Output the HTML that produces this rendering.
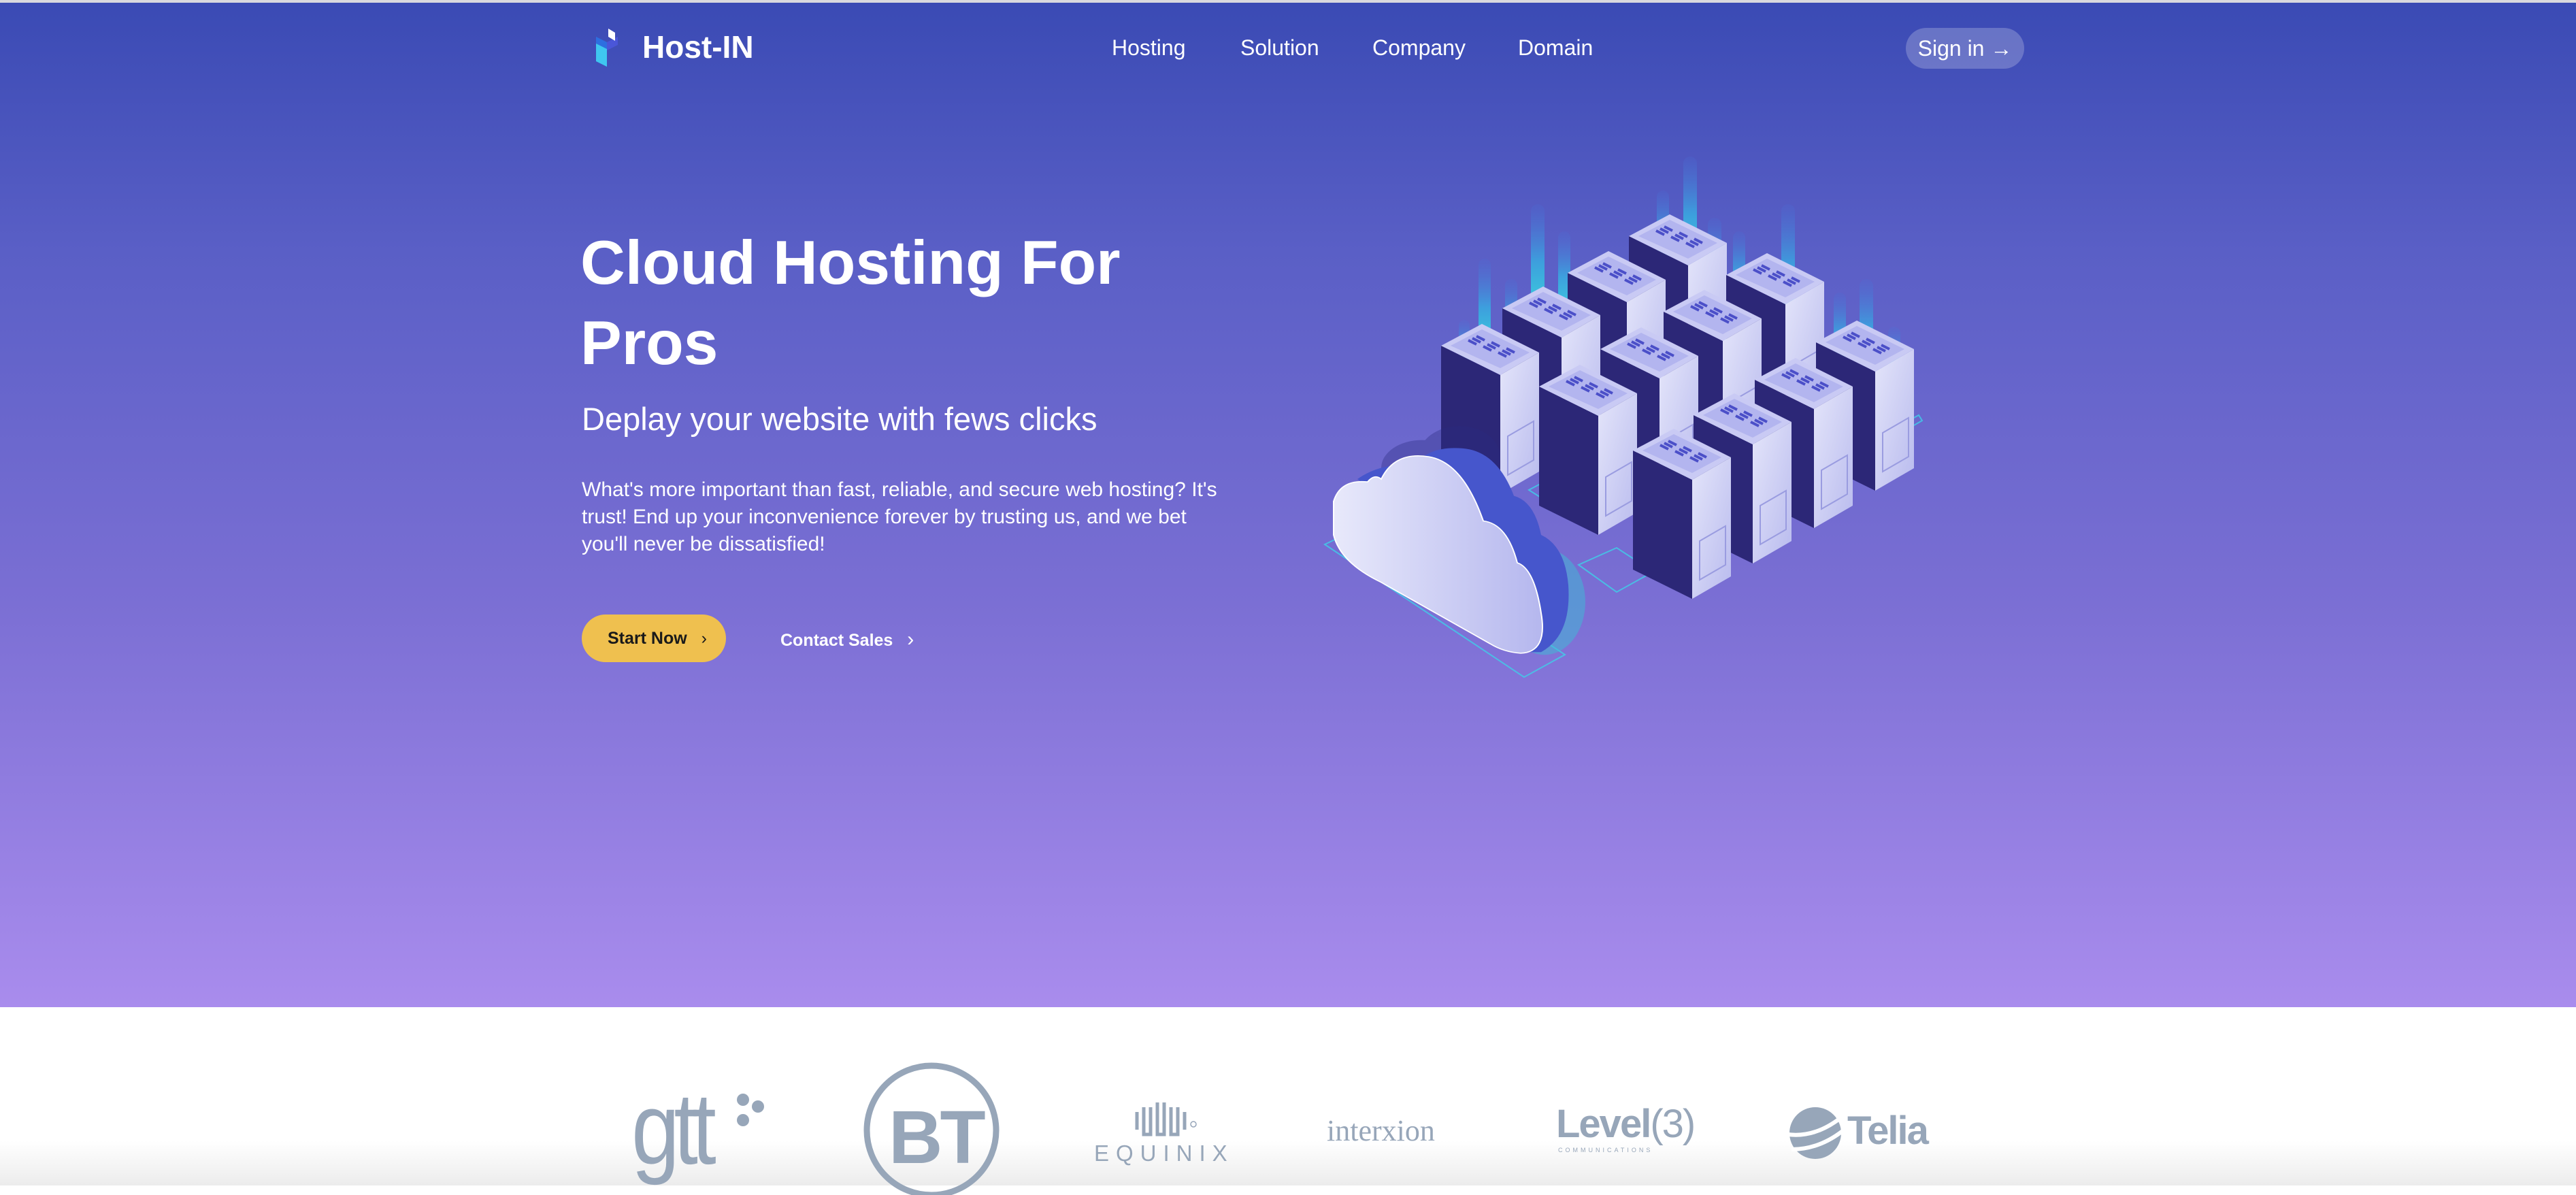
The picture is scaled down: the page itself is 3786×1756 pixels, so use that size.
<!DOCTYPE html>
<html><head><meta charset="utf-8"><style>
*{margin:0;padding:0;box-sizing:border-box}
body{width:3786px;height:1742px;overflow:hidden;font-family:"Liberation Sans",sans-serif;background:#fff;position:relative}
.hero{position:absolute;left:0;top:0;width:3786px;height:1480px;background:linear-gradient(180deg,#3a4ab4 0%,#5a5fc6 25%,#7b6fd4 60%,#a98ced 100%)}
.topline{position:absolute;left:0;top:0;width:3786px;height:4px;background:#d9d9de}
.abs{position:absolute;color:#fff;white-space:nowrap}
.nav{font-size:32px;top:52px}
.signin{position:absolute;left:2801px;top:41px;width:174px;height:60px;border-radius:30px;background:rgba(255,255,255,.22);color:#fff;font-size:32px;line-height:60px;text-align:center}
h1{position:absolute;left:853px;top:328px;font-size:91px;line-height:118px;color:#fff;font-weight:700}
.sub{left:855px;top:588px;font-size:47px;font-weight:400}
.para{position:absolute;left:855px;top:700px;width:935px;font-size:30px;line-height:40px;color:#fff}
.btn{position:absolute;left:855px;top:903px;width:212px;height:70px;border-radius:35px;background:#efc04f;color:#1a1a1a;font-weight:700;font-size:25px;line-height:70px;padding-left:38px}
.contact{left:1147px;top:923px;font-size:25px;font-weight:700}
.bottom{position:absolute;left:0;top:1480px;width:3786px;height:262px;background:linear-gradient(180deg,#fff 0%,#fff 75%,#ececec 100%)}
.logo{position:absolute;color:#97a6b9;white-space:nowrap}
</style></head><body>
<div class="hero"></div>
<div class="topline"></div>

<svg class="abs" style="left:872px;top:40px" width="50" height="62" viewBox="0 0 50 62">
<polygon points="4,14 20,22 20,58 4,50" fill="#2d6fe0"/>
<polygon points="4,24 20,32 20,58 4,50" fill="#3fc6f0"/>
<polygon points="20,22 36,14 36,26 20,34" fill="#4a56d8"/>
<polygon points="22,2 32,8 32,20 22,14" fill="#fff"/>
</svg>
<div class="abs" style="left:944px;top:42px;font-size:46px;font-weight:700">Host-IN</div>
<div class="abs nav" style="left:1634px">Hosting</div>
<div class="abs nav" style="left:1823px">Solution</div>
<div class="abs nav" style="left:2017px">Company</div>
<div class="abs nav" style="left:2231px">Domain</div>
<div class="signin">Sign in →</div>

<h1>Cloud Hosting For<br>Pros</h1>
<div class="abs sub">Deplay your website with fews clicks</div>
<div class="para">What's more important than fast, reliable, and secure web hosting? It's trust! End up your inconvenience forever by trusting us, and we bet you'll never be dissatisfied!</div>
<div class="btn">Start Now <span style="font-weight:400;margin-left:14px">›</span></div>
<div class="abs contact">Contact Sales <span style="font-weight:400;margin-left:14px;font-size:30px">›</span></div>

<svg class="abs" style="left:0;top:0" width="3786" height="1480" viewBox="0 0 3786 1480">
<defs>
<linearGradient id="bar" x1="0" y1="0" x2="0" y2="1"><stop offset="0" stop-color="#4a6fd8" stop-opacity=".2"/><stop offset=".6" stop-color="#3aa6e0"/><stop offset="1" stop-color="#38d0e0"/></linearGradient>
<linearGradient id="rf" x1="0" y1="0" x2="1" y2="1"><stop offset="0" stop-color="#e4e5fa"/><stop offset="1" stop-color="#b9bbee"/></linearGradient>
<linearGradient id="cl" x1="0" y1="0" x2="1" y2="0"><stop offset="0" stop-color="#e8e9fb"/><stop offset="1" stop-color="#b5b7ee"/></linearGradient>
<g id="srv">
<polygon points="0,32 87,75 87,250 0,207" fill="#2c2777"/>
<polygon points="87,75 144,42 144,217 87,250" fill="url(#rf)"/>
<polygon points="0,32 60,0 144,42 87,75" fill="#c9caf4"/>
<polygon points="14,32 60,8 130,42 87,65" fill="#b3b5ef"/>
<g stroke="#4b4fc8" stroke-width="4">
<line x1="40" y1="24" x2="52" y2="30"/><line x1="46" y1="21" x2="58" y2="27"/><line x1="52" y1="18" x2="64" y2="24"/>
<line x1="62" y1="33" x2="74" y2="39"/><line x1="68" y1="30" x2="80" y2="36"/><line x1="74" y1="27" x2="86" y2="33"/>
<line x1="84" y1="42" x2="96" y2="48"/><line x1="90" y1="39" x2="102" y2="45"/><line x1="96" y1="36" x2="108" y2="42"/>
</g>
<polygon points="98,165 136,143 136,200 98,222" fill="none" stroke="#9a9ce0" stroke-width="2"/>
</g>
</defs>
<g fill="url(#bar)" opacity=".9">
<rect x="2474" y="230" width="20" height="140" rx="10"/>
<rect x="2435" y="280" width="18" height="110" rx="9"/>
<rect x="2250" y="300" width="20" height="140" rx="10"/>
<rect x="2290" y="340" width="18" height="110" rx="9"/>
<rect x="2173" y="380" width="18" height="120" rx="9"/>
<rect x="2212" y="410" width="18" height="100" rx="9"/>
<rect x="2144" y="470" width="16" height="70" rx="8"/>
<rect x="2510" y="320" width="20" height="120" rx="10"/>
<rect x="2547" y="340" width="18" height="100" rx="9"/>
<rect x="2618" y="300" width="20" height="150" rx="10"/>
<rect x="2733" y="410" width="20" height="120" rx="10"/>
<rect x="2695" y="430" width="18" height="100" rx="9"/>
<rect x="2775" y="480" width="18" height="80" rx="9"/>
</g>
<g fill="none" stroke="#3fd0e8" stroke-width="2" opacity=".8">
<polygon points="1947,800 2240,995 2300,962 2010,770"/>
<polygon points="2247,720 2320,766 2430,700 2360,660"/>
<polygon points="2320,830 2376,870 2430,840 2376,805"/>
<polygon points="2820,610 2825,618 2700,690 2690,682"/>
</g>
<use href="#srv" x="2394" y="315"/>
<use href="#srv" x="2304" y="369"/>
<use href="#srv" x="2537" y="372"/>
<use href="#srv" x="2208" y="421"/>
<use href="#srv" x="2445" y="426"/>
<use href="#srv" x="2669" y="471"/>
<use href="#srv" x="2118" y="476"/>
<use href="#srv" x="2352" y="481"/>
<use href="#srv" x="2579" y="526"/>
<use href="#srv" x="2262" y="536"/>
<use href="#srv" x="2489" y="578"/>
<use href="#srv" x="2400" y="630"/>
<g transform="translate(0,48) scale(1,0.82)">
<g opacity=".35" fill="#2a2a80">
<ellipse cx="2090" cy="780" rx="60" ry="50"/><ellipse cx="2145" cy="760" rx="60" ry="55"/>
</g>
<g opacity=".5" fill="#3bbcd6"><ellipse cx="2270" cy="1020" rx="60" ry="95"/></g>
<path d="M1995,800 Q2030,770 2080,775 Q2100,740 2150,745 Q2200,750 2225,830 Q2255,840 2265,900 Q2300,920 2305,990 Q2310,1080 2265,1110 L2230,1110 Q2260,1060 2225,1000 Z" fill="#4656cc"/>
<path d="M1960,840 Q1970,800 2010,805 Q2020,790 2030,800 Q2050,750 2100,760 Q2150,770 2180,875 Q2215,880 2230,950 Q2255,960 2265,1040 Q2275,1110 2235,1112 Q2210,1110 2190,1095 L2030,985 Q1970,950 1960,900 Z" fill="url(#cl)" stroke="#fff" stroke-width="2"/>
</g>
</svg>

<div class="bottom"></div>
<div class="logo" style="left:928px;top:1572px;font-size:150px;font-weight:400;letter-spacing:-10px;transform:scaleX(.85);transform-origin:left">gtt</div>
<svg class="abs" style="left:1080px;top:1600px" width="50" height="70"><g fill="#97a6b9"><circle cx="12" cy="16" r="9"/><circle cx="34" cy="26" r="9"/><circle cx="12" cy="46" r="9"/></g></svg>
<svg class="abs" style="left:1262px;top:1556px" width="214" height="200"><circle cx="107" cy="105" r="95" fill="none" stroke="#97a6b9" stroke-width="9"/></svg>
<div class="logo" style="left:1306px;top:1608px;font-size:110px;font-weight:700;letter-spacing:-4px">BT</div>
<svg class="abs" style="left:1666px;top:1612px" width="100" height="60"><g fill="none" stroke="#97a6b9" stroke-width="5"><path d="M5,22 L5,48 M15,15 L15,55 L25,55 L25,15 M35,8 L35,55 L45,55 L45,8 M55,15 L55,55 L65,55 L65,15 M75,22 L75,48"/></g><circle cx="88" cy="40" r="4" fill="none" stroke="#97a6b9" stroke-width="1.5"/></svg>
<div class="logo" style="left:1608px;top:1676px;font-size:33px;letter-spacing:10px">EQUINIX</div>
<div class="logo" style="left:1950px;top:1636px;font-size:44px;font-family:'Liberation Serif',serif">interxion</div>
<div class="logo" style="left:2287px;top:1618px;font-size:58px;font-weight:700;letter-spacing:-2px">Level<span style="font-weight:400">(3)</span></div>
<div class="logo" style="left:2290px;top:1685px;font-size:9px;letter-spacing:4px">COMMUNICATIONS</div>
<svg class="abs" style="left:2628px;top:1617px" width="80" height="100"><defs><clipPath id="tc"><circle cx="40" cy="48" r="38"/></clipPath></defs><g clip-path="url(#tc)" fill="#97a6b9"><rect x="0" y="0" width="80" height="100"/></g><g fill="none" stroke="#fff" stroke-width="6"><path d="M0,50 Q40,55 78,25"/><path d="M5,72 Q45,72 80,45"/></g></svg>
<div class="logo" style="left:2715px;top:1628px;font-size:58px;font-weight:700;letter-spacing:-2px">Telia</div>
</body></html>
